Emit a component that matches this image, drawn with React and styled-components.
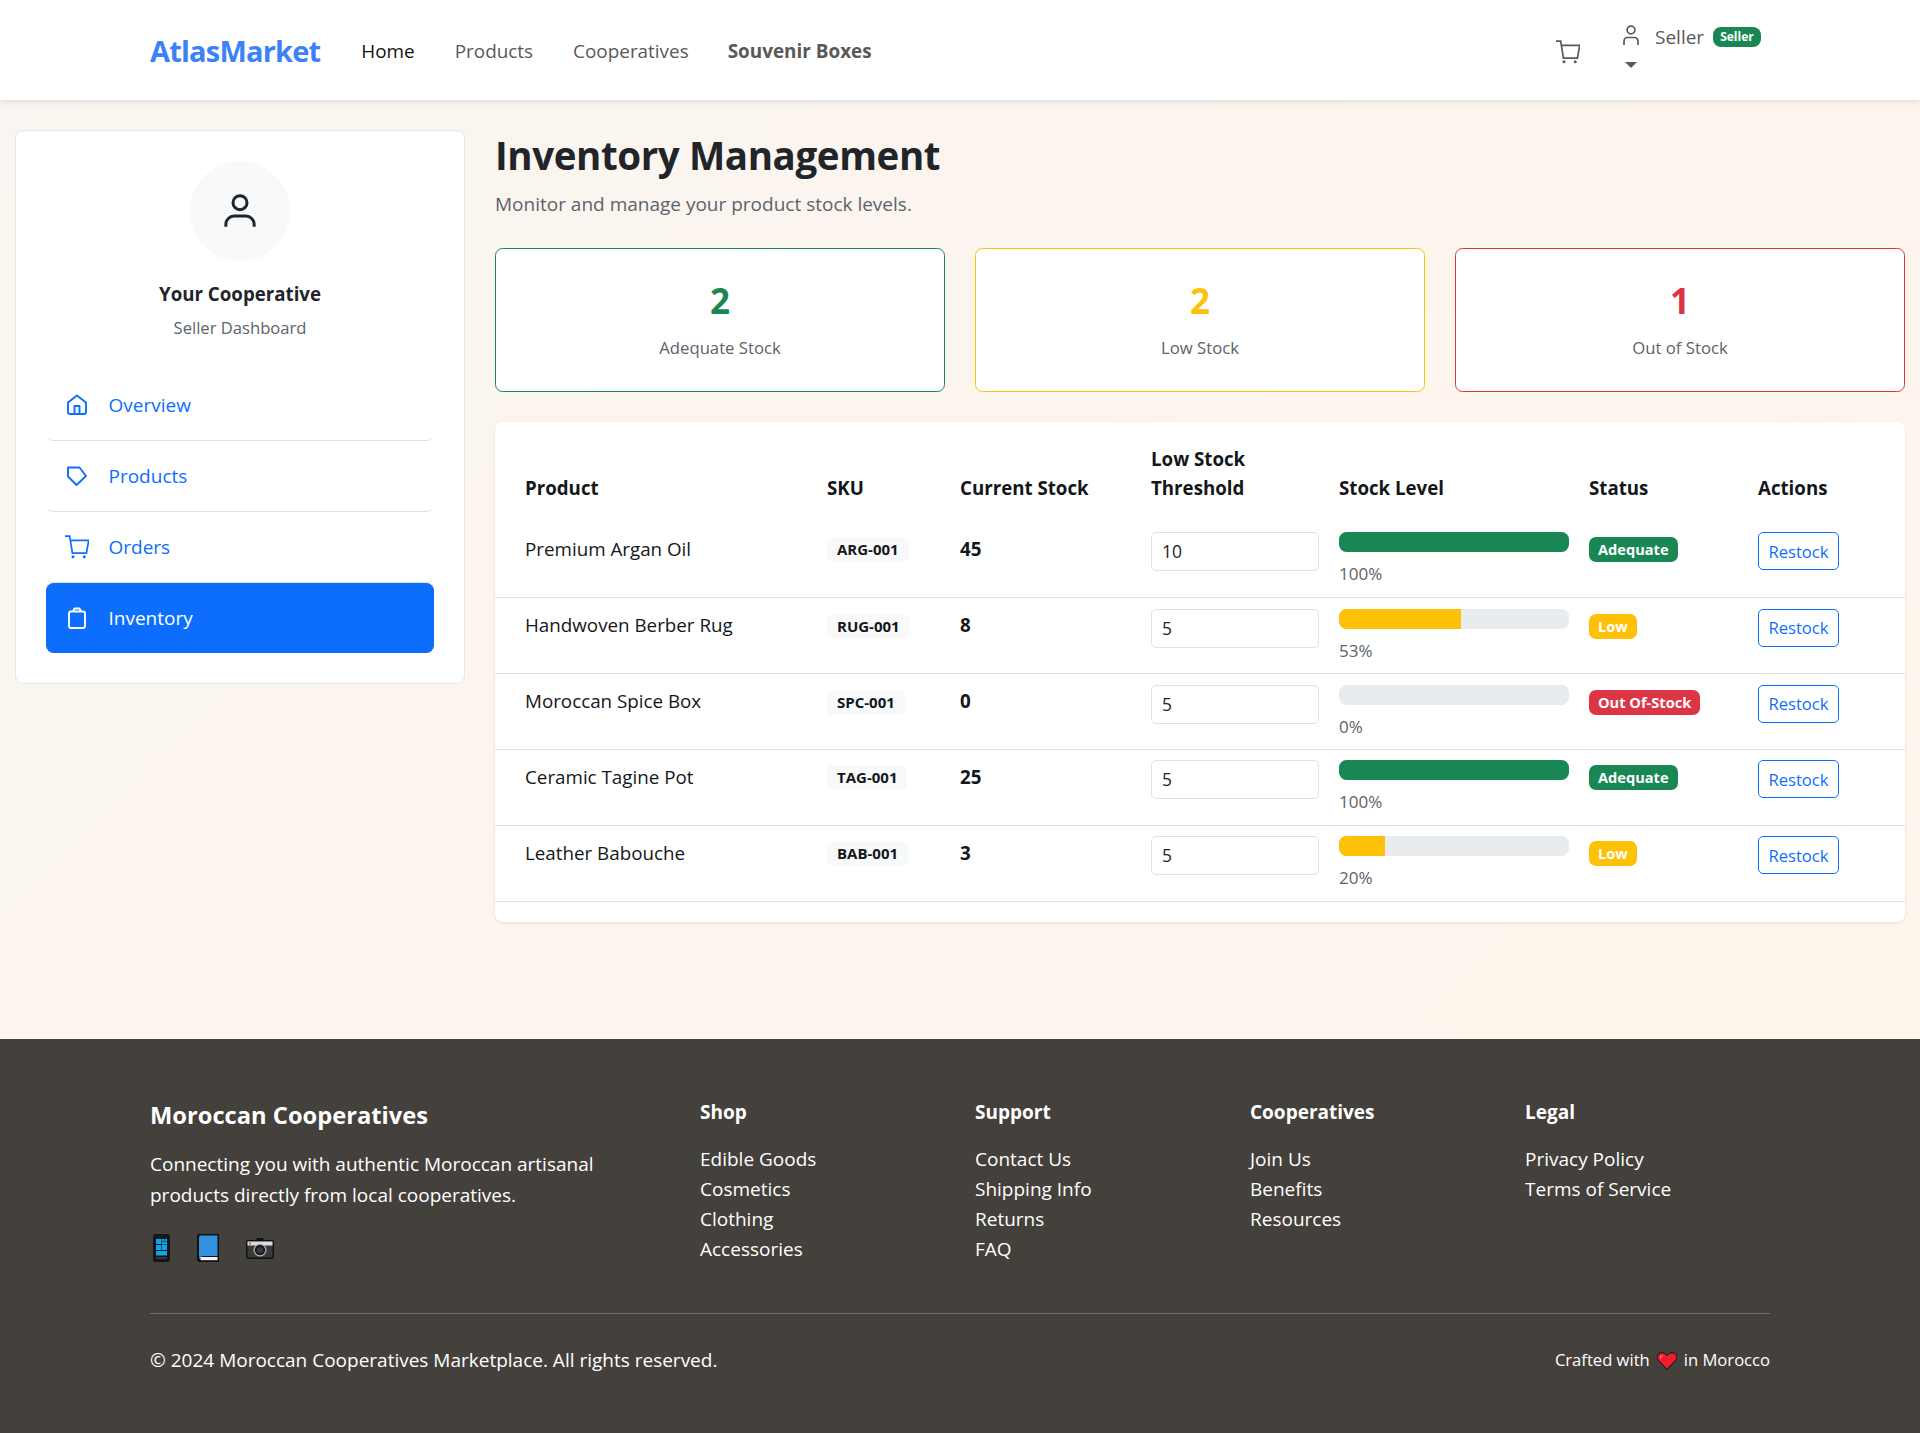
import React from 'react';
import styled, { createGlobalStyle } from 'styled-components';

const font = '"Open Sans", "Noto Sans", sans-serif';

const GlobalStyle = createGlobalStyle`
  html, body { margin: 0; padding: 0; }
  body {
    font-family: ${font};
    font-size: 20px;
    line-height: 1.5;
    color: #212529;
    background: #fff;
  }
  * { box-sizing: border-box; }
`;

const Page = styled.div`
  width: 1920px;
  min-height: 1433px;
  background: linear-gradient(135deg, #faf5f0 0%, #fff5ec 100%);
`;

const Navbar = styled.nav`
  height: 100px;
  background: #fff;
  box-shadow: 0 2px 5px rgba(0, 0, 0, 0.1);
  padding: 2px 150px 0;
  display: flex;
  align-items: center;
`;

const Brand = styled.a`
  font-size: 29px;
  font-weight: 700;
  color: #3b82f6;
  margin-right: 41px;
  letter-spacing: -0.8px;
`;

const NavLink = styled.a`
  font-size: 18.9px;
  margin-right: ${(p) => p.$gap || 40}px;
  color: ${(p) => (p.$active ? '#111' : '#595959')};
  font-weight: ${(p) => (p.$bold ? 700 : 400)};
`;

const NavRight = styled.div`
  margin-left: auto;
  display: flex;
  align-items: center;
  gap: 43px;
  color: #595959;
`;

const NavCart = styled.span`
  display: flex;
  margin-top: 2px;
`;

const UserBlock = styled.div`
  display: flex;
  flex-direction: column;
  width: 147px;
  margin-bottom: 12px;
`;

const UserRow = styled.div`
  display: flex;
  align-items: center;
  font-size: 19px;
  height: 30px;
  svg { margin-bottom: 5px; }
`;

const UserName = styled.span`
  margin-left: 16px;
`;

const Caret = styled.div`
  width: 0;
  height: 0;
  margin: 10px 0 0 2px;
  border-left: 6px solid transparent;
  border-right: 6px solid transparent;
  border-top: 6px solid #595959;
`;

const SellerBadge = styled.span`
  margin-left: 9px;
  padding: 3px 7px;
  background: #198754;
  color: #fff;
  font-size: 12px;
  line-height: 14px;
  font-weight: 700;
  border-radius: 8px;
`;

const Body = styled.div`
  height: 939px;
  padding: 30px 15px 0 15px;
  display: flex;
  align-items: flex-start;
  gap: 30px;
`;

const Sidebar = styled.aside`
  width: 450px;
  flex: none;
  background: #fff;
  border: 1px solid #e4e6ea;
  border-radius: 8px;
  padding: 30px;
  height: 554px;
`;

const Avatar = styled.div`
  width: 100px;
  height: 100px;
  margin: 0 auto 20px;
  border-radius: 50%;
  background: #f8f9fa;
  display: flex;
  align-items: center;
  justify-content: center;
`;

const SideTitle = styled.div`
  text-align: center;
  font-weight: 700;
  font-size: 18.7px;
  margin-top: -1px;
  color: #212529;
`;

const SideSub = styled.div`
  text-align: center;
  font-size: 16.6px;
  color: #5c636a;
  margin-top: 7.5px;
  margin-bottom: 30px;
`;

const SideItem = styled.a`
  height: ${(p) => (p.$active ? 70 : 71)}px;
  display: flex;
  align-items: center;
  padding: 0 19px;
  gap: 19.5px;
  font-size: 19px;
  color: ${(p) => (p.$active ? '#fff' : '#0d6efd')};
  background: ${(p) => (p.$active ? '#0d6efd' : '#fff')};
  border-radius: 7.5px;
  border-bottom: ${(p) => (p.$last ? 'none' : '1px solid #dee2e6')};
`;

const Main = styled.main`
  flex: 1;
  min-width: 0;
`;

const Heading = styled.h1`
  margin: 1px 0 0;
  font-size: 38.5px;
  line-height: 48px;
  letter-spacing: -0.4px;
  font-weight: 700;
  color: #212529;
`;

const Lead = styled.p`
  margin: 10px 0 0;
  font-size: 19px;
  line-height: 30px;
  color: #5c636a;
`;

const StatRow = styled.div`
  display: grid;
  grid-template-columns: repeat(3, 1fr);
  gap: 30px;
  margin-top: 28.5px;
`;

const StatCard = styled.div`
  height: 144px;
  padding-top: 2px;
  background: #fff;
  border: 1px solid ${(p) => p.$color};
  border-radius: 7.5px;
  display: flex;
  flex-direction: column;
  align-items: center;
  justify-content: center;
`;

const StatValue = styled.div`
  font-size: 35px;
  line-height: 42px;
  font-weight: 700;
  color: ${(p) => p.$color};
`;

const StatLabel = styled.div`
  margin-top: 12px;
  font-size: 16.7px;
  line-height: 27px;
  color: #5c636a;
`;

const TableCard = styled.div`
  margin-top: 30px;
  height: 500px;
  background: #fff;
  border-radius: 7.5px;
  box-shadow: 0 1px 3px rgba(0, 0, 0, 0.1);
  padding: 22px 0 0;
`;

const StockTable = styled.table`
  width: 100%;
  border-collapse: collapse;
  table-layout: fixed;
  font-size: 18.8px;
  color: #14171a;
`;

const Th = styled.th`
  text-align: left;
  vertical-align: bottom;
  font-size: 18.7px;
  line-height: 29.4px;
  font-weight: 700;
  padding: 0 10px 19.5px;
  width: ${(p) => p.$w}px;
  &:first-child { padding-left: 30px; }
`;

const Tr = styled.tr`
  height: 75.9px;
  border-bottom: 1px solid #dee2e6;
`;

const Td = styled.td`
  vertical-align: top;
  padding: 10.5px 10px 9px;
  &:first-child { padding-left: 30px; }
`;

const TextTd = styled(Td)`
  padding-top: 12px;
  line-height: 30px;
  font-weight: ${(p) => (p.$bold ? 700 : 400)};
`;

const Sku = styled.span`
  display: inline-block;
  margin-top: 5px;
  padding: 4px 10px;
  background: #f8f9fa;
  border-radius: 6px;
  font-size: 15px;
  font-weight: 700;
  line-height: 17px;
`;

const ThresholdInput = styled.div`
  width: 168px;
  height: 39px;
  border: 1px solid #dee2e6;
  border-radius: 5px;
  font-size: 17.5px;
  line-height: 37px;
  padding: 0 10px;
  color: #212529;
`;

const Track = styled.div`
  height: 20px;
  background: #e9ecef;
  border-radius: 7.5px;
  overflow: hidden;
`;

const Fill = styled.div`
  height: 100%;
  background: ${(p) => p.$color};
`;

const Pct = styled.div`
  font-size: 17px;
  line-height: 26px;
  margin-top: 9px;
  color: #5c636a;
`;

const StatusBadge = styled.span`
  display: inline-block;
  margin-top: 5px;
  padding: 4px 9px;
  background: ${(p) => p.$color};
  color: #fff;
  font-size: 14.6px;
  line-height: 17px;
  font-weight: 700;
  border-radius: 7px;
`;

const RestockButton = styled.button`
  font-family: inherit;
  height: 38px;
  width: 81px;
  padding: 0;
  background: #fff;
  color: #0d6efd;
  border: 1px solid #0d6efd;
  border-radius: 5px;
  font-size: 16.6px;
`;

const Footer = styled.footer`
  height: 394px;
  background: #44403c;
  color: #fff;
  padding: 60px 150px 0;
`;

const FooterGrid = styled.div`
  display: grid;
  grid-template-columns: 550px repeat(4, 275px);
  height: 215px;
  border-bottom: 1px solid #73706c;
`;

const BrandTitle = styled.div`
  font-size: 23.7px;
  line-height: 30px;
  font-weight: 700;
  margin-top: 1px;
`;

const BrandText = styled.p`
  margin: 19px 0 0;
  width: 480px;
  font-size: 19px;
  line-height: 30.5px;
`;

const Socials = styled.div`
  display: flex;
  align-items: center;
  margin-top: 24px;
  height: 28px;
  padding-left: 3px;
`;

const SocialSlot = styled.span`
  display: flex;
  margin-right: ${(p) => p.$gap}px;
`;

const ColTitle = styled.div`
  font-size: 19px;
  line-height: 28px;
  font-weight: 700;
  margin-top: -1px;
  margin-bottom: 18px;
`;

const FooterLink = styled.div`
  font-size: 19px;
  line-height: 30px;
`;

const FooterBottom = styled.div`
  display: flex;
  align-items: center;
  justify-content: space-between;
  padding-top: 31.5px;
  font-size: 19px;
`;

const Crafted = styled.div`
  display: flex;
  align-items: center;
  gap: 7px;
  margin-top: 2px;
  font-size: 16.6px;
`;

const NavPersonIcon = () => (
  <svg width="16" height="20" viewBox="0 0 16 20" fill="none" stroke="currentColor" strokeWidth="1.7">
    <circle cx="8" cy="5" r="3.9" />
    <path d="M1 20v-4a3.500 3.500 0 0 1 3.500-3.500h7A3.500 3.500 0 0 1 15 16v4" />
  </svg>
);

const AvatarIcon = () => (
  <svg width="40" height="40" viewBox="0 0 24 24" fill="none" stroke="#212529" strokeWidth="1.8">
    <circle cx="12" cy="7" r="4.200" />
    <path d="M3.500 21.500V20a5 5 0 0 1 5-5h7a5 5 0 0 1 5 5v1.500" />
  </svg>
);

const HomeIcon = () => (
  <svg width="24" height="24" viewBox="0 0 24 24" fill="none" stroke="currentColor" strokeWidth="1.9" strokeLinejoin="round">
    <path d="M12 2.500 3 9.500V19a2 2 0 0 0 2 2h14a2 2 0 0 0 2-2V9.500z" />
    <path d="M9.500 21v-8h5v8" />
  </svg>
);

const TagIcon = () => (
  <svg width="24" height="24" viewBox="0 0 24 24" fill="none" stroke="currentColor" strokeWidth="1.9" strokeLinejoin="round">
    <path d="M3 3.500h11.500L21 12l-9.500 9L3 12.500z" />
  </svg>
);

const CartIcon = ({ size }) => (
  <svg width={size} height={size} viewBox="0 0 24 24" fill="none" stroke="currentColor" strokeWidth="1.700">
    <path d="M0 1.200h4.700l2.700 17h14l2.300-12.800H5.700" />
    <circle cx="8" cy="21.800" r="1.500" fill="currentColor" stroke="none" />
    <circle cx="19.300" cy="21.800" r="1.500" fill="currentColor" stroke="none" />
  </svg>
);

const BagIcon = () => (
  <svg width="24" height="24" viewBox="0 0 24 24" fill="none" stroke="currentColor" strokeWidth="1.900" strokeLinejoin="round">
    <rect x="4" y="5.500" width="16" height="16.500" rx="2" />
    <path d="M8 5.500l1.500-3h5l1.500 3" />
  </svg>
);

const PhoneEmoji = () => (
  <svg width="17" height="28" viewBox="0 0 17 28">
    <rect width="17" height="28" rx="2.500" fill="#14161a" />
    <g fill="#0ea5e9">
      <rect x="3" y="5" width="5" height="5" />
      <rect x="8.500" y="5" width="2.500" height="2.500" />
      <rect x="11.500" y="5" width="2.500" height="2.500" />
      <rect x="8.500" y="8" width="5.500" height="2.500" />
      <rect x="3" y="11" width="5" height="5" />
      <rect x="8.500" y="11" width="5.500" height="5" />
      <rect x="3" y="17" width="11" height="4.500" />
    </g>
    <rect x="3" y="23.500" width="11" height="1" fill="#556" />
  </svg>
);

const BookEmoji = () => (
  <svg width="22" height="28" viewBox="0 0 22 28">
    <path d="M3 0h19v28H3a3 3 0 0 1-3-3V3a3 3 0 0 1 3-3z" fill="#101114" />
    <path d="M4 1.500h16.500V22H4a2 2 0 0 0-2 1V3.500a2 2 0 0 1 2-2z" fill="#338fdf" />
    <rect x="2" y="22" width="3" height="3" fill="#1f6fbf" />
    <rect x="3.500" y="23" width="17" height="3.200" fill="#eef4fa" />
  </svg>
);

const CameraEmoji = () => (
  <svg width="28" height="21" viewBox="0 0 28 21">
    <path d="M2 2h8l1-2h6l1 2h8a2 2 0 0 1 2 2v15a2 2 0 0 1-2 2H2a2 2 0 0 1-2-2V4a2 2 0 0 1 2-2z" fill="#101114" />
    <rect x="1.500" y="3.500" width="25" height="16" rx="1" fill="#3a3a3c" />
    <rect x="1.500" y="3.500" width="25" height="4" fill="#dcdcdc" />
    <rect x="3" y="4.500" width="2" height="2" fill="#e5533d" />
    <circle cx="14" cy="12" r="6.500" fill="#bbb" />
    <circle cx="14" cy="12" r="5.300" fill="#1b1b1d" />
    <circle cx="14" cy="12" r="3" fill="#3a3a3c" />
  </svg>
);

const HeartEmoji = () => (
  <svg width="20" height="18" viewBox="0 0 20 18">
    <path d="M10 17.300 1.600 8.700a4.800 4.800 0 0 1 0-6.600 4.700 4.700 0 0 1 6.800 0L10 3.700l1.600-1.600a4.700 4.700 0 0 1 6.800 0 4.800 4.800 0 0 1 0 6.600z" fill="#ee1c2e" stroke="#111" />
    <path d="M3.500 6.500 C3.500 4.500 5 3.500 6 3.500" fill="none" stroke="#f58a8a" strokeWidth="1.200" />
  </svg>
);

const rows = [
  { name: 'Premium Argan Oil', sku: 'ARG-001', stock: 45, threshold: 10, pct: 100, color: '#198754', status: 'Adequate' },
  { name: 'Handwoven Berber Rug', sku: 'RUG-001', stock: 8, threshold: 5, pct: 53, color: '#ffc107', status: 'Low' },
  { name: 'Moroccan Spice Box', sku: 'SPC-001', stock: 0, threshold: 5, pct: 0, color: '#dc3545', status: 'Out Of-Stock' },
  { name: 'Ceramic Tagine Pot', sku: 'TAG-001', stock: 25, threshold: 5, pct: 100, color: '#198754', status: 'Adequate' },
  { name: 'Leather Babouche', sku: 'BAB-001', stock: 3, threshold: 5, pct: 20, color: '#ffc107', status: 'Low' },
];

const footerCols = [
  { title: 'Shop', links: ['Edible Goods', 'Cosmetics', 'Clothing', 'Accessories'] },
  { title: 'Support', links: ['Contact Us', 'Shipping Info', 'Returns', 'FAQ'] },
  { title: 'Cooperatives', links: ['Join Us', 'Benefits', 'Resources'] },
  { title: 'Legal', links: ['Privacy Policy', 'Terms of Service'] },
];

export default function App() {
  return (
    <Page>
      <GlobalStyle />
      <Navbar>
        <Brand>AtlasMarket</Brand>
        <NavLink $active>Home</NavLink>
        <NavLink>Products</NavLink>
        <NavLink $gap={39}>Cooperatives</NavLink>
        <NavLink $bold>Souvenir Boxes</NavLink>
        <NavRight>
          <NavCart><CartIcon size={24} /></NavCart>
          <UserBlock>
            <UserRow>
              <NavPersonIcon />
              <UserName>Seller</UserName>
              <SellerBadge>Seller</SellerBadge>
            </UserRow>
            <Caret />
          </UserBlock>
        </NavRight>
      </Navbar>

      <Body>
        <Sidebar>
          <Avatar>
            <AvatarIcon />
          </Avatar>
          <SideTitle>Your Cooperative</SideTitle>
          <SideSub>Seller Dashboard</SideSub>
          <SideItem><HomeIcon />Overview</SideItem>
          <SideItem><TagIcon />Products</SideItem>
          <SideItem><CartIcon size={24} />Orders</SideItem>
          <SideItem $active $last><BagIcon />Inventory</SideItem>
        </Sidebar>

        <Main>
          <Heading>Inventory Management</Heading>
          <Lead>Monitor and manage your product stock levels.</Lead>
          <StatRow>
            <StatCard $color="#198754"><StatValue $color="#198754">2</StatValue><StatLabel>Adequate Stock</StatLabel></StatCard>
            <StatCard $color="#ffc107"><StatValue $color="#ffc107">2</StatValue><StatLabel>Low Stock</StatLabel></StatCard>
            <StatCard $color="#dc3545"><StatValue $color="#dc3545">1</StatValue><StatLabel>Out of Stock</StatLabel></StatCard>
          </StatRow>
          <TableCard>
            <StockTable>
              <thead>
                <tr>
                  <Th $w={322}>Product</Th>
                  <Th $w={133}>SKU</Th>
                  <Th $w={191}>Current Stock</Th>
                  <Th $w={188}>Low Stock Threshold</Th>
                  <Th $w={250}>Stock Level</Th>
                  <Th $w={169}>Status</Th>
                  <Th>Actions</Th>
                </tr>
              </thead>
              <tbody>
                {rows.map((r) => (
                  <Tr key={r.sku}>
                    <TextTd>{r.name}</TextTd>
                    <Td><Sku>{r.sku}</Sku></Td>
                    <TextTd $bold>{r.stock}</TextTd>
                    <Td><ThresholdInput>{r.threshold}</ThresholdInput></Td>
                    <Td>
                      <Track><Fill $color={r.color} style={{ width: `${r.pct}%` }} /></Track>
                      <Pct>{r.pct}%</Pct>
                    </Td>
                    <Td><StatusBadge $color={r.color}>{r.status}</StatusBadge></Td>
                    <Td><RestockButton>Restock</RestockButton></Td>
                  </Tr>
                ))}
              </tbody>
            </StockTable>
          </TableCard>
        </Main>
      </Body>

      <Footer>
        <FooterGrid>
          <div>
            <BrandTitle>Moroccan Cooperatives</BrandTitle>
            <BrandText>Connecting you with authentic Moroccan artisanal products directly from local cooperatives.</BrandText>
            <Socials>
              <SocialSlot $gap={27}><PhoneEmoji /></SocialSlot>
              <SocialSlot $gap={27}><BookEmoji /></SocialSlot>
              <SocialSlot $gap={0}><CameraEmoji /></SocialSlot>
            </Socials>
          </div>
          {footerCols.map((c) => (
            <div key={c.title}>
              <ColTitle>{c.title}</ColTitle>
              {c.links.map((l) => <FooterLink key={l}>{l}</FooterLink>)}
            </div>
          ))}
        </FooterGrid>
        <FooterBottom>
          <div>© 2024 Moroccan Cooperatives Marketplace. All rights reserved.</div>
          <Crafted>Crafted with <HeartEmoji /> in Morocco</Crafted>
        </FooterBottom>
      </Footer>
    </Page>
  );
}
